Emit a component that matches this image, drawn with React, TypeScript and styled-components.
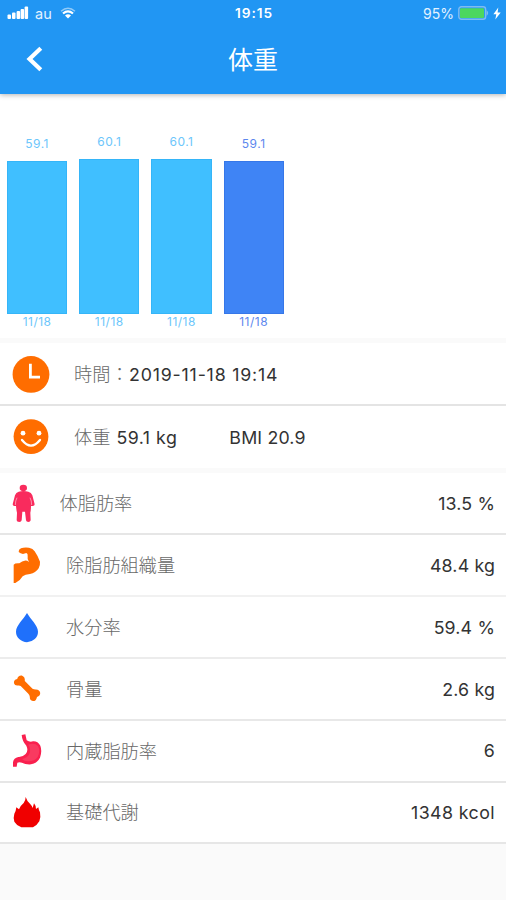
import React from 'react';
import styled, { createGlobalStyle } from 'styled-components';

const GlobalStyle = createGlobalStyle`
  * { box-sizing: border-box; }
  body {
    margin: 0;
    background: #fafafa;
    font-family: Inter, "Noto Sans CJK JP", sans-serif;
  }
  svg { display: block; flex: none; }
`;

const Screen = styled.main`
  width: 506px;
  height: 900px;
  overflow: hidden;
  background: #fafafa;
`;

const Header = styled.header`
  position: relative;
  height: 93.5px;
  background: #2196f3;
  color: #fff;
  box-shadow: 0 1px 5px rgba(0, 0, 0, 0.3);
`;

const StatusBar = styled.div`
  display: grid;
  grid-template-columns: 1fr auto 1fr;
  align-items: center;
  height: 26px;
  padding: 0 5px 0 7px;
  font-size: 13.5px;
`;

const StatusGroup = styled.div<{ $end?: boolean }>`
  display: flex;
  align-items: center;
  justify-content: ${(p) => (p.$end ? 'flex-end' : 'flex-start')};
  gap: ${(p) => (p.$end ? '4px' : '8px')};
  color: #e3f2ff;
`;

const Carrier = styled.span`
  margin-left: -2px;
  font-size: 14.5px;
`;

const Percent = styled.span`
  font-size: 14px;
`;

const Clock = styled.time`
  font-weight: 600;
  font-size: 13.7px;
  letter-spacing: 0.9px;
`;

const NavBar = styled.div`
  display: grid;
  grid-template-columns: 70px 1fr 70px;
  align-items: center;
  height: 68px;
`;

const BackButton = styled.button`
  display: flex;
  padding: 0 0 2px 25px;
  border: 0;
  background: none;
  color: #fff;
`;

const Title = styled.h1`
  margin: 0;
  padding-top: 1px;
  font-size: 25px;
  line-height: 67px;
  font-weight: 400;
  text-align: center;
`;

const Chart = styled.section`
  display: flex;
  align-items: flex-end;
  gap: 12px;
  height: 244.5px;
  padding: 0 7px 8.5px;
  background: #fff;
`;

const Column = styled.div<{ $active?: boolean }>`
  display: flex;
  flex-direction: column;
  width: 60.2px;
  text-align: center;
  font-size: 12px;
  letter-spacing: 0.5px;
  line-height: 16px;
  color: ${(p) => (p.$active ? '#5c87ee' : '#6cc6fb')};
`;

const Bar = styled.div<{ $active?: boolean }>`
  margin-top: 9px;
  background: ${(p) => (p.$active ? '#3f84f5' : '#40bfff')};
  border: 1px solid ${(p) => (p.$active ? '#3677e8' : '#35b5f8')};
`;

const Section = styled.section`
  margin-top: 5px;
  background: #fff;
`;

const Row = styled.div<{ $height: number; $line?: string }>`
  display: flex;
  align-items: center;
  height: ${(p) => p.$height}px;
  padding: 0 11px 0 12px;
  border-bottom: ${(p) => (p.$line ? `2px solid ${p.$line}` : '0')};
  background: #fff;
`;

const IconCell = styled.span<{ $width: number }>`
  flex: none;
  width: ${(p) => p.$width}px;
`;

const Label = styled.span`
  padding-bottom: 2px;
  font-family: "Noto Sans CJK JP", sans-serif;
  font-size: 18.2px;
  font-weight: 300;
  line-height: 24px;
  color: #686868;
  white-space: pre;
`;

const Value = styled.span<{ $end?: boolean; $gap?: number; $tracking?: number; $drop?: number }>`
  margin-left: ${(p) => (p.$end ? 'auto' : `${p.$gap ?? 0}px`)};
  padding-top: ${(p) => p.$drop ?? 1}px;
  font-size: 17.8px;
  letter-spacing: ${(p) => p.$tracking ?? 0.15}px;
  line-height: 24px;
  color: #333;
  white-space: pre;
`;

const SignalIcon = () => (
  <svg width="22" height="14" viewBox="0 0 22 14" fill="#fff">
    <rect x="0.5" y="8.5" width="3.5" height="4.5" rx="1" />
    <rect x="5" y="6.5" width="3.5" height="6.5" rx="1" />
    <rect x="9.6" y="5" width="3.5" height="8" rx="1" />
    <rect x="13.6" y="3" width="3.5" height="10" rx="1" />
    <rect x="17.6" y="0.5" width="3.5" height="12.5" rx="1" />
  </svg>
);

const WifiIcon = () => (
  <svg width="16" height="12" viewBox="0 0 16 12" fill="none" stroke="#fff">
    <path d="M1 4.3Q8 -2 15 4.3" strokeWidth="1.4" opacity=".5" />
    <path d="M3 6.5Q8 2.2 13 6.5" strokeWidth="2.2" />
    <path d="M5 8.4Q8 6 11 8.4L8 11.4z" fill="#fff" stroke="none" />
  </svg>
);

const BatteryIcon = () => (
  <svg width="31" height="14" viewBox="0 0 31 14">
    <rect x=".8" y=".8" width="26.8" height="12.4" rx="2.5" fill="none" stroke="#7fbcf1" strokeWidth="1.4" />
    <rect x="2" y="2.2" width="24" height="9.8" rx="1" fill="#4cd75f" />
    <path d="M28.5 4q3.4 3 0 6z" fill="#7fbcf1" />
  </svg>
);

const BoltIcon = () => (
  <svg width="8" height="13" viewBox="0 0 8 13" fill="#fff">
    <path d="M5.3 .5 .4 7.2h2.9L2.3 12.5 7.7 5.4H4.6z" />
  </svg>
);

const BackIcon = () => (
  <svg width="18" height="26" viewBox="0 0 18 26" fill="none" stroke="currentColor" strokeWidth="4.2">
    <path d="M15.8 2.2 4.5 13l11.3 10.8" />
  </svg>
);

const ClockIcon = () => (
  <svg width="38" height="38" viewBox="0 0 38 38">
    <circle cx="19" cy="19.4" r="18.4" fill="#ff6d00" />
    <path d="M18.4 8.7v13.5H28" fill="none" stroke="#fff" strokeWidth="2.8" />
  </svg>
);

const SmileIcon = () => (
  <svg width="38" height="38" viewBox="0 0 38 38">
    <circle cx="19" cy="18.6" r="17.4" fill="#ff6d00" />
    <circle cx="11" cy="15.2" r="2.4" fill="#fff" />
    <circle cx="27" cy="15.2" r="2.4" fill="#fff" />
    <path d="M10 22q9 11.2 18 0" fill="none" stroke="#fff" strokeWidth="2.3" strokeLinecap="round" />
  </svg>
);

const BodyIcon = () => (
  <svg width="24" height="38" viewBox="36 42 72 114">
    <g fill="#f92b5d">
      <ellipse cx="70" cy="54" rx="11" ry="9.5" />
      <path d="M56 65Q70 61 85 65Q94 67 97 76L104 103Q104 108 98 108H93Q93 120 91 128L92 151Q91 156 85 156Q79 156 78 151L75 125H67L65 151Q64 156 58 156Q50 156 50 151L51 128Q49 120 48 108H43Q38 108 38 103L45 76Q48 67 56 65Z" />
    </g>
    <path d="M51 83Q46 92 46 105M90 83Q95 92 95 105" fill="none" stroke="#fff" strokeWidth="2.4" opacity=".6" />
  </svg>
);

const MuscleIcon = () => (
  <svg width="30" height="38" viewBox="36 228 90 114" fill="#ff6d00">
    <path d="M63 235Q72 231 87 233Q99 235 104 244Q112 255 120 275Q121 285 116 295Q107 309 90 312Q75 313 68 319Q61 332 46 339H41V284Q45 279 58 280Q67 273 74 272Q81 271 87 276Q81 267 83 258Q84 251 79 249L69 252Q61 250 56 246Q55 239 63 235Z" />
  </svg>
);

const DropIcon = () => (
  <svg width="30" height="34" viewBox="0 0 30 34" fill="#1f70fb">
    <path d="M15 3C11.5 9.2 4 15.5 4 21.7a11 10.5 0 0 0 22 0C26 15.5 18.5 9.2 15 3z" />
  </svg>
);

const BoneIcon = () => (
  <svg width="30" height="30" viewBox="0 0 30 30" fill="#ff6d00">
    <path d="M2 9.2q-.6-3.4 3.2-4.2Q6 1.1 9.8 1.4q3.5 1.4 3 5.7L20.5 14.8q1.5.9 3.4.8 3.8.4 4.3 3.3.1 2.9-3.2 4-.8 4.3-4.1 4.2-3.3-.7-3.1-4.4-.2-1.7-1.7-3.2l-7.4-7.5q-1-.7-2.4-.5-3.7.6-4.3-2.3z" />
  </svg>
);

const StomachIcon = () => (
  <svg width="30" height="34" viewBox="36 42 90 102">
    <path d="M65 45 76 43 80 61Q89 67 99 64Q113 63 121 77Q127 94 120 113Q111 130 93 133Q76 134 66 128Q58 125 52 128L50 140H39V127Q41 114 55 111Q67 112 77 102Q86 92 79 77Q67 65 65 45Z" fill="#f9204e" />
    <path d="M85 74Q103 67 114 78Q122 94 113 111Q103 125 83 124Q72 124 66 117Q82 114 88 102Q94 87 85 74Z" fill="#f93a60" />
  </svg>
);

const FireIcon = () => (
  <svg width="30" height="34" viewBox="36 225 90 102" fill="#f00000">
    <path d="M77 231Q81 244 90 251Q96 257 98 264L102 250Q108 257 108 267L115 262Q116 270 120 277Q123 292 118 304Q112 315 99 322H64Q50 317 43 305Q39 295 43 281Q48 273 49 262L57 268Q61 257 71 249Q77 241 77 231Z" />
  </svg>
);

const bars = [
  { value: '59.1', date: '11/18', height: 153 },
  { value: '60.1', date: '11/18', height: 154.5 },
  { value: '60.1', date: '11/18', height: 154.5 },
  { value: '59.1', date: '11/18', height: 153, active: true },
];

const metrics = [
  { label: '体脂肪率', value: '13.5 %', Icon: BodyIcon, offset: 47.5, height: 62, line: '#e6e6e6' },
  { label: '除脂肪組織量', value: '48.4 kg', Icon: MuscleIcon, offset: 54, height: 62, line: '#f1f1f1' },
  { label: '水分率', value: '59.4 %', Icon: DropIcon, offset: 54, height: 62, line: '#ececec' },
  { label: '骨量', value: '2.6 kg', Icon: BoneIcon, offset: 54, height: 62, line: '#e8e8e8' },
  { label: '内蔵脂肪率', value: '6', Icon: StomachIcon, offset: 54, height: 61.5, line: '#e6e6e6' },
  { label: '基礎代謝', value: '1348 kcol', Icon: FireIcon, offset: 54, height: 61.5, line: '#e6e6e6', tracking: 0.42 },
];

export default function App() {
  return (
    <Screen>
      <GlobalStyle />
      <Header>
        <StatusBar>
          <StatusGroup>
            <SignalIcon />
            <Carrier>au</Carrier>
            <WifiIcon />
          </StatusGroup>
          <Clock>19:15</Clock>
          <StatusGroup $end>
            <Percent>95%</Percent>
            <BatteryIcon />
            <BoltIcon />
          </StatusGroup>
        </StatusBar>
        <NavBar>
          <BackButton aria-label="戻る">
            <BackIcon />
          </BackButton>
          <Title>体重</Title>
        </NavBar>
      </Header>
      <Chart>
        {bars.map((bar, i) => (
          <Column key={i} $active={bar.active}>
            <span>{bar.value}</span>
            <Bar $active={bar.active} style={{ height: bar.height }} />
            <span>{bar.date}</span>
          </Column>
        ))}
      </Chart>
      <Section>
        <Row $height={63} $line="#e4e4e4">
          <IconCell $width={62}><ClockIcon /></IconCell>
          <Label>時間：</Label>
          <Value $gap={0.5} $tracking={0.8} $drop={3}>2019-11-18 19:14</Value>
        </Row>
        <Row $height={62}>
          <IconCell $width={62}><SmileIcon /></IconCell>
          <Label>体重</Label>
          <Value $gap={6} $tracking={0.5}>59.1 kg</Value>
          <Value $gap={52} $tracking={0.15}>BMI 20.9</Value>
        </Row>
      </Section>
      <Section>
        {metrics.map(({ label, value, Icon, offset, height, line, tracking }) => (
          <Row key={label} $height={height} $line={line}>
            <IconCell $width={offset}><Icon /></IconCell>
            <Label>{label}</Label>
            <Value $end $tracking={tracking}>{value}</Value>
          </Row>
        ))}
      </Section>
    </Screen>
  );
}
